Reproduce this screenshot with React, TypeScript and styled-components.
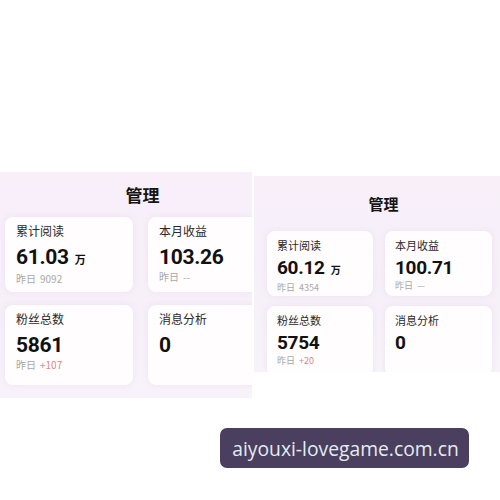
import React from "react";
import styled, { createGlobalStyle } from "styled-components";

const Global = createGlobalStyle`
  html, body { margin: 0; padding: 0; background: #ffffff; }
  body { font-family: "Noto Sans CJK SC", "Noto Sans", sans-serif; }
`;

const Page = styled.div`
  position: relative;
  width: 500px;
  height: 500px;
  overflow: hidden;
  background: #fff;
`;

const Row = styled.div`
  display: flex;
  align-items: flex-start;
  gap: 2px;
  padding-top: 172px;
`;

type PanelProps = { $w: number; $top: number; $h: number; $pad: number };

const Panel = styled.div<PanelProps>`
  width: ${(p) => p.$w}px;
  height: ${(p) => p.$h}px;
  margin-top: ${(p) => p.$top}px;
  background: linear-gradient(180deg, #f8eff9 0%, #f6f0f9 60%, #f8f3fa 100%);
  overflow: hidden;
  display: flex;
  flex-direction: column;
  padding-left: ${(p) => p.$pad}px;
  box-sizing: border-box;
  flex-shrink: 0;
`;

const Title = styled.div<{ $h: number; $size: number; $offset: number }>`
  height: ${(p) => p.$h}px;
  flex-shrink: 0;
  display: flex;
  align-items: center;
  justify-content: center;
  padding-left: ${(p) => p.$offset}px;
  font-size: ${(p) => p.$size}px;
  font-weight: 700;
  color: #151515;
`;

const Grid = styled.div<{ $cols: string; $colGap: number; $rowGap: number; $rows: string }>`
  display: grid;
  grid-template-columns: ${(p) => p.$cols};
  grid-template-rows: ${(p) => p.$rows};
  column-gap: ${(p) => p.$colGap}px;
  row-gap: ${(p) => p.$rowGap}px;
`;

const Card = styled.div<{ $pad: number; $padTop: number }>`
  background: #fffdfd;
  border-radius: 8px;
  box-shadow: 0 0 6px rgba(235, 220, 240, 0.7);
  padding: ${(p) => p.$padTop}px ${(p) => p.$pad}px 0;
  display: flex;
  flex-direction: column;
  box-sizing: border-box;
  overflow: hidden;
`;

const Label = styled.div<{ $size: number }>`
  font-size: ${(p) => p.$size}px;
  line-height: ${(p) => p.$size + 4}px;
  color: #2a2a2a;
`;

const Value = styled.div<{ $size: number; $mt: number }>`
  margin-top: ${(p) => p.$mt}px;
  font-family: Roboto, "Noto Sans", sans-serif;
  font-size: ${(p) => p.$size}px;
  line-height: ${(p) => p.$size + 1}px;
  font-weight: 700;
  letter-spacing: -0.3px;
  color: #111;
  display: flex;
  align-items: baseline;
  gap: 6px;
`;

const Unit = styled.span<{ $size: number }>`
  font-family: "Noto Sans CJK SC", sans-serif;
  font-size: ${(p) => p.$size}px;
  font-weight: 700;
  letter-spacing: 0;
`;

const Sub = styled.div<{ $size: number; $mt: number }>`
  margin-top: ${(p) => p.$mt}px;
  font-size: ${(p) => p.$size}px;
  line-height: ${(p) => p.$size + 4}px;
  color: #a8a8a8;
  display: flex;
  gap: 4px;
`;

const Delta = styled.span`
  color: #d58a8a;
`;

const Watermark = styled.div`
  position: absolute;
  left: 220px;
  top: 428px;
  width: 249px;
  height: 40px;
  border-radius: 7px;
  background: #4a3f5f;
  color: #e4ecf2;
  font-family: "Open Sans", "DejaVu Sans", sans-serif;
  font-size: 19.3px;
  display: flex;
  align-items: center;
  justify-content: center;
  padding-left: 2px;
  box-sizing: border-box;
`;

type Stat = { label: string; value: string; unit?: string; sub?: string; delta?: boolean };

type Scale = {
  label: number;
  value: number;
  unit: number;
  sub: number;
  pad: number;
  padTop: number;
  valueMt: number;
  subMt: number;
};

const StatCard = ({ s, sc }: { s: Stat; sc: Scale }) => (
  <Card $pad={sc.pad} $padTop={sc.padTop}>
    <Label $size={sc.label}>{s.label}</Label>
    <Value $size={sc.value} $mt={sc.valueMt}>
      {s.value}
      {s.unit && <Unit $size={sc.unit}>{s.unit}</Unit>}
    </Value>
    {s.sub !== undefined && (
      <Sub $size={sc.sub} $mt={sc.subMt}>
        <span>昨日</span>
        {s.delta ? <Delta>{s.sub}</Delta> : <span>{s.sub}</span>}
      </Sub>
    )}
  </Card>
);

const leftStats: Stat[] = [
  { label: "累计阅读", value: "61.03", unit: "万", sub: "9092" },
  { label: "本月收益", value: "103.26", sub: "--" },
  { label: "粉丝总数", value: "5861", sub: "+107", delta: true },
  { label: "消息分析", value: "0" },
];

const rightStats: Stat[] = [
  { label: "累计阅读", value: "60.12", unit: "万", sub: "4354" },
  { label: "本月收益", value: "100.71", sub: "—" },
  { label: "粉丝总数", value: "5754", sub: "+20", delta: true },
  { label: "消息分析", value: "0" },
];

const leftScale: Scale = { label: 12, value: 21, unit: 11, sub: 10, pad: 11, padTop: 6, valueMt: 7, subMt: 2 };
const rightScale: Scale = { label: 11, value: 19, unit: 10, sub: 9, pad: 10, padTop: 7, valueMt: 5, subMt: 1 };

export default function App() {
  return (
    <Page>
      <Global />
      <Row>
        <Panel $w={252} $top={0} $h={226} $pad={5}>
          <Title $h={45} $size={17} $offset={28}>管理</Title>
          <Grid $cols="128px 110px" $colGap={15} $rowGap={13} $rows="75px 80px">
            {leftStats.map((s, i) => (
              <StatCard key={i} s={s} sc={leftScale} />
            ))}
          </Grid>
        </Panel>
        <Panel $w={246} $top={4} $h={196} $pad={13}>
          <Title $h={55} $size={15} $offset={0}>管理</Title>
          <Grid $cols="106px 107px" $colGap={12} $rowGap={10} $rows="65px 70px">
            {rightStats.map((s, i) => (
              <StatCard key={i} s={s} sc={rightScale} />
            ))}
          </Grid>
        </Panel>
      </Row>
      <Watermark>aiyouxi-lovegame.com.cn</Watermark>
    </Page>
  );
}
